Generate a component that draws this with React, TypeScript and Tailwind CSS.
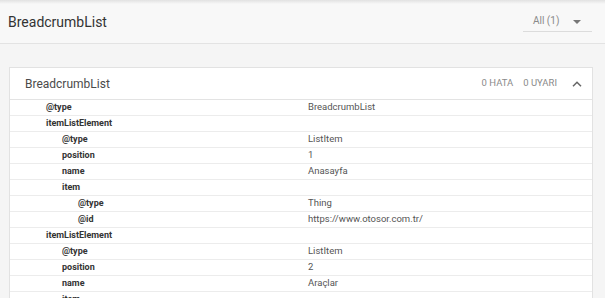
import React from "react";

type Row = { k: string; v: string; lvl: number };

const rows: Row[] = [
  { k: "@type", v: "BreadcrumbList", lvl: 0 },
  { k: "itemListElement", v: "", lvl: 0 },
  { k: "@type", v: "ListItem", lvl: 1 },
  { k: "position", v: "1", lvl: 1 },
  { k: "name", v: "Anasayfa", lvl: 1 },
  { k: "item", v: "", lvl: 1 },
  { k: "@type", v: "Thing", lvl: 2 },
  { k: "@id", v: "https://www.otosor.com.tr/", lvl: 2 },
  { k: "itemListElement", v: "", lvl: 0 },
  { k: "@type", v: "ListItem", lvl: 1 },
  { k: "position", v: "2", lvl: 1 },
  { k: "name", v: "Araçlar", lvl: 1 },
  { k: "item", v: "", lvl: 1 },
  { k: "@type", v: "Thing", lvl: 2 },
];

const pad = ["pl-[36px]", "pl-[52px]", "pl-[68px]"];

export default function App() {
  return (
    <div
      className="w-[605px] h-[298px] overflow-hidden bg-[#f5f5f5] relative"
      style={{ fontFamily: "Roboto, 'Liberation Sans', sans-serif" }}
    >
      <div className="absolute top-0 left-0 right-0 h-[4px] bg-gradient-to-b from-[#e2e2e2] to-transparent" />
      <div className="h-[44px] border-b border-[#e3e3e3] bg-[#f8f8f8] flex items-center justify-between pl-[8px] pr-[13px]">
        <div className="text-[14px] text-[#333] pt-[1px]">BreadcrumbList</div>
        <div className="w-[69px] h-[23px] border-b border-[#dcdcdc] flex items-end justify-between pl-[10px] pr-[11px] pb-[5px] mt-[-2px]">
          <span className="text-[10px] text-[#8a8a8a] leading-none">All (1)</span>
          <svg width="8" height="4" viewBox="0 0 8 4" className="mb-[2px]">
            <path d="M0 0 L8 0 L4 4 Z" fill="#777" />
          </svg>
        </div>
      </div>
      <div className="mt-[23px] ml-[9px] w-[584px] bg-white border border-[#e2e2e2]">
        <div className="h-[32px] flex items-center justify-between pl-[15px] pr-[10px] border-b border-[#e3e3e3]">
          <span className="text-[12px] text-[#4a4a4a]">BreadcrumbList</span>
          <div className="flex items-center text-[9.5px] text-[#8a8a8a]">
            <span>0 HATA</span>
            <span className="ml-[10px]">0 UYARI</span>
            <svg width="10" height="6" viewBox="0 0 10 6" className="ml-[15px]">
              <path d="M1 5.2 L5 1.2 L9 5.2" fill="none" stroke="#666" strokeWidth="1.5" />
            </svg>
          </div>
        </div>
        {rows.map((r, i) => (
          <div key={i} className="h-[16px] flex items-center border-b border-[#ececec]">
            <div className={`w-[298px] ${pad[r.lvl]} text-[9px] font-bold text-[#333]`}>
              {r.k}
            </div>
            <div className="text-[9.5px] text-[#555]">{r.v}</div>
          </div>
        ))}
      </div>
    </div>
  );
}
